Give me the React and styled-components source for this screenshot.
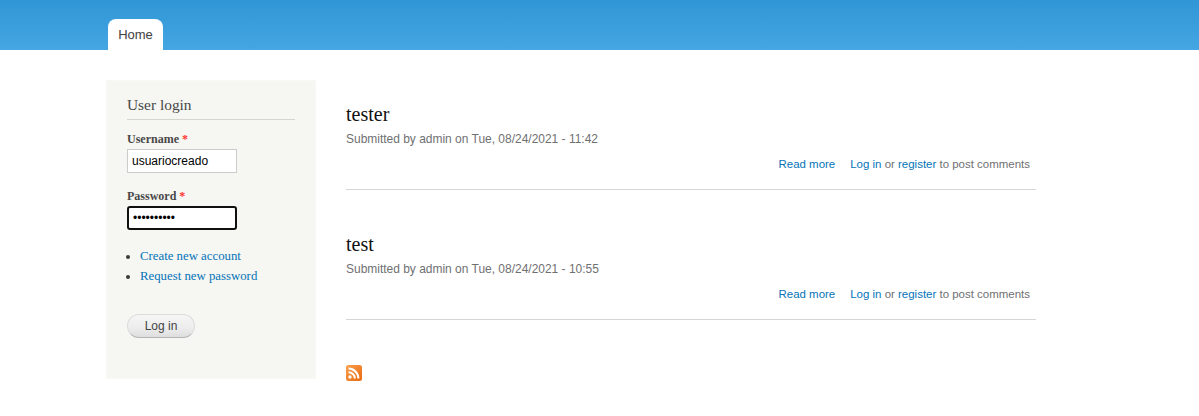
import styled, { createGlobalStyle } from "styled-components";

const GlobalStyle = createGlobalStyle`
    html, body {
        margin: 0;
        padding: 0;
        background: #fff;
    }
`;

const Header = styled.header`
    height: 50px;
    background: linear-gradient(to bottom, #3096d5 0%, #45a6e3 100%);
    padding-left: 108px;
    display: flex;
    align-items: flex-end;
    box-sizing: border-box;
`;

const Tab = styled.a`
    width: 55px;
    height: 31px;
    background: #fff;
    border-radius: 8px 8px 0 0;
    font: 13px/31px "Liberation Sans", sans-serif;
    color: #444;
    text-align: center;
    text-shadow: 0 1px #eee;
`;

const Main = styled.div`
    display: flex;
    padding: 30px 0 0 106px;
`;

const Sidebar = styled.aside`
    width: 210px;
    height: 299px;
    box-sizing: border-box;
    background: #f6f6f2;
    border: 1px solid #f8f8f5;
    padding: 14px 20px 0 20px;
    font-family: "Liberation Serif", serif;
    color: #484848;
`;

const BlockTitle = styled.h2`
    margin: 0 0 12px;
    font-size: 15.4px;
    font-weight: 400;
    line-height: 20px;
    padding-bottom: 4px;
    border-bottom: 1px solid #d6d6d0;
`;

const Field = styled.div`
    margin-bottom: ${(p) => p.$gap}px;
`;

const Label = styled.label`
    display: block;
    font-size: 12px;
    font-weight: 700;
    line-height: 15px;
    margin-bottom: 2px;
`;

const Required = styled.span`
    color: #f33;
`;

const Input = styled.input`
    display: block;
    width: 110px;
    height: 24px;
    box-sizing: border-box;
    margin: 0;
    padding: 2px 4px;
    background: #fff;
    color: #000;
    font: 12px "Liberation Sans", sans-serif;
    border: ${(p) => (p.$focused ? "2px solid #101010" : "1px solid #ccc")};
    border-radius: ${(p) => (p.$focused ? "3px" : "0")};
    outline: none;
`;

const LinkList = styled.ul`
    margin: 0 0 28px;
    padding: 0 0 0 13px;
    font-size: 12.8px;
    line-height: 20px;
    li::marker {
        color: #3b3b3b;
    }
`;

const Link = styled.a`
    color: #0474b8;
    text-decoration: none;
`;

const LoginButton = styled.button`
    display: block;
    width: 68px;
    height: 24px;
    padding: 0;
    border: 1px solid #dcdcdc;
    border-bottom-color: #b4b4b4;
    border-radius: 15px;
    background: linear-gradient(to bottom, #f6f6f6 0%, #ececec 60%, #dedede 100%);
    color: #444;
    font: 12px "Liberation Sans", sans-serif;
`;

const Content = styled.main`
    width: 690px;
    margin-left: 30px;
`;

const Article = styled.article`
    height: 110px;
    box-sizing: border-box;
    margin-bottom: 20px;
    padding-top: 22px;
    border-bottom: 1px solid #d6d6d6;
`;

const ArticleTitle = styled.h2`
    margin: 0;
    font: 400 20px/24px "Liberation Serif", serif;
    color: #111;
`;

const Submitted = styled.div`
    margin-top: 5px;
    font: 11.97px/16px "Liberation Sans", sans-serif;
    color: #6f7072;
`;

const ArticleLinks = styled.div`
    margin-top: 9px;
    padding-right: 6px;
    display: flex;
    justify-content: flex-end;
    gap: 15px;
    font: 11.48px/16px "Liberation Sans", sans-serif;
    color: #6f7072;
`;

const FeedIcon = styled.a`
    display: block;
    width: 16px;
    height: 16px;
    margin-top: 45px;
`;

const posts = [
    { title: "tester", date: "Tue, 08/24/2021 - 11:42" },
    { title: "test", date: "Tue, 08/24/2021 - 10:55" },
];

export default function App() {
    return (
        <>
            <GlobalStyle />
            <Header>
                <Tab>Home</Tab>
            </Header>
            <Main>
                <Sidebar>
                    <BlockTitle>User login</BlockTitle>
                    <Field $gap={15.6}>
                        <Label>Username <Required>*</Required></Label>
                        <Input type="text" defaultValue="usuariocreado" />
                    </Field>
                    <Field $gap={16.4}>
                        <Label>Password <Required>*</Required></Label>
                        <Input $focused type="password" defaultValue="1234567890" />
                    </Field>
                    <LinkList>
                        <li><Link>Create new account</Link></li>
                        <li><Link>Request new password</Link></li>
                    </LinkList>
                    <LoginButton>Log in</LoginButton>
                </Sidebar>
                <Content>
                    {posts.map((p) => (
                        <Article key={p.title}>
                            <ArticleTitle>{p.title}</ArticleTitle>
                            <Submitted>Submitted by admin on {p.date}</Submitted>
                            <ArticleLinks>
                                <Link>Read more</Link>
                                <span><Link>Log in</Link> or <Link>register</Link> to post comments</span>
                            </ArticleLinks>
                        </Article>
                    ))}
                    <FeedIcon>
                        <svg width="16" height="16" viewBox="0 0 16 16">
                            <defs>
                                <linearGradient id="rss" x1="0" y1="0" x2="1" y2="1">
                                    <stop offset="0" stopColor="#f9a04e" />
                                    <stop offset="1" stopColor="#e96a10" />
                                </linearGradient>
                            </defs>
                            <rect width="16" height="16" rx="2.5" fill="url(#rss)" />
                            <circle cx="4" cy="12" r="1.7" fill="#fff" />
                            <path d="M2.5 7.2a6.3 6.3 0 0 1 6.3 6.3M2.5 3.6a9.9 9.9 0 0 1 9.9 9.9" fill="none" stroke="#fff" strokeWidth="2" />
                        </svg>
                    </FeedIcon>
                </Content>
            </Main>
        </>
    );
}
